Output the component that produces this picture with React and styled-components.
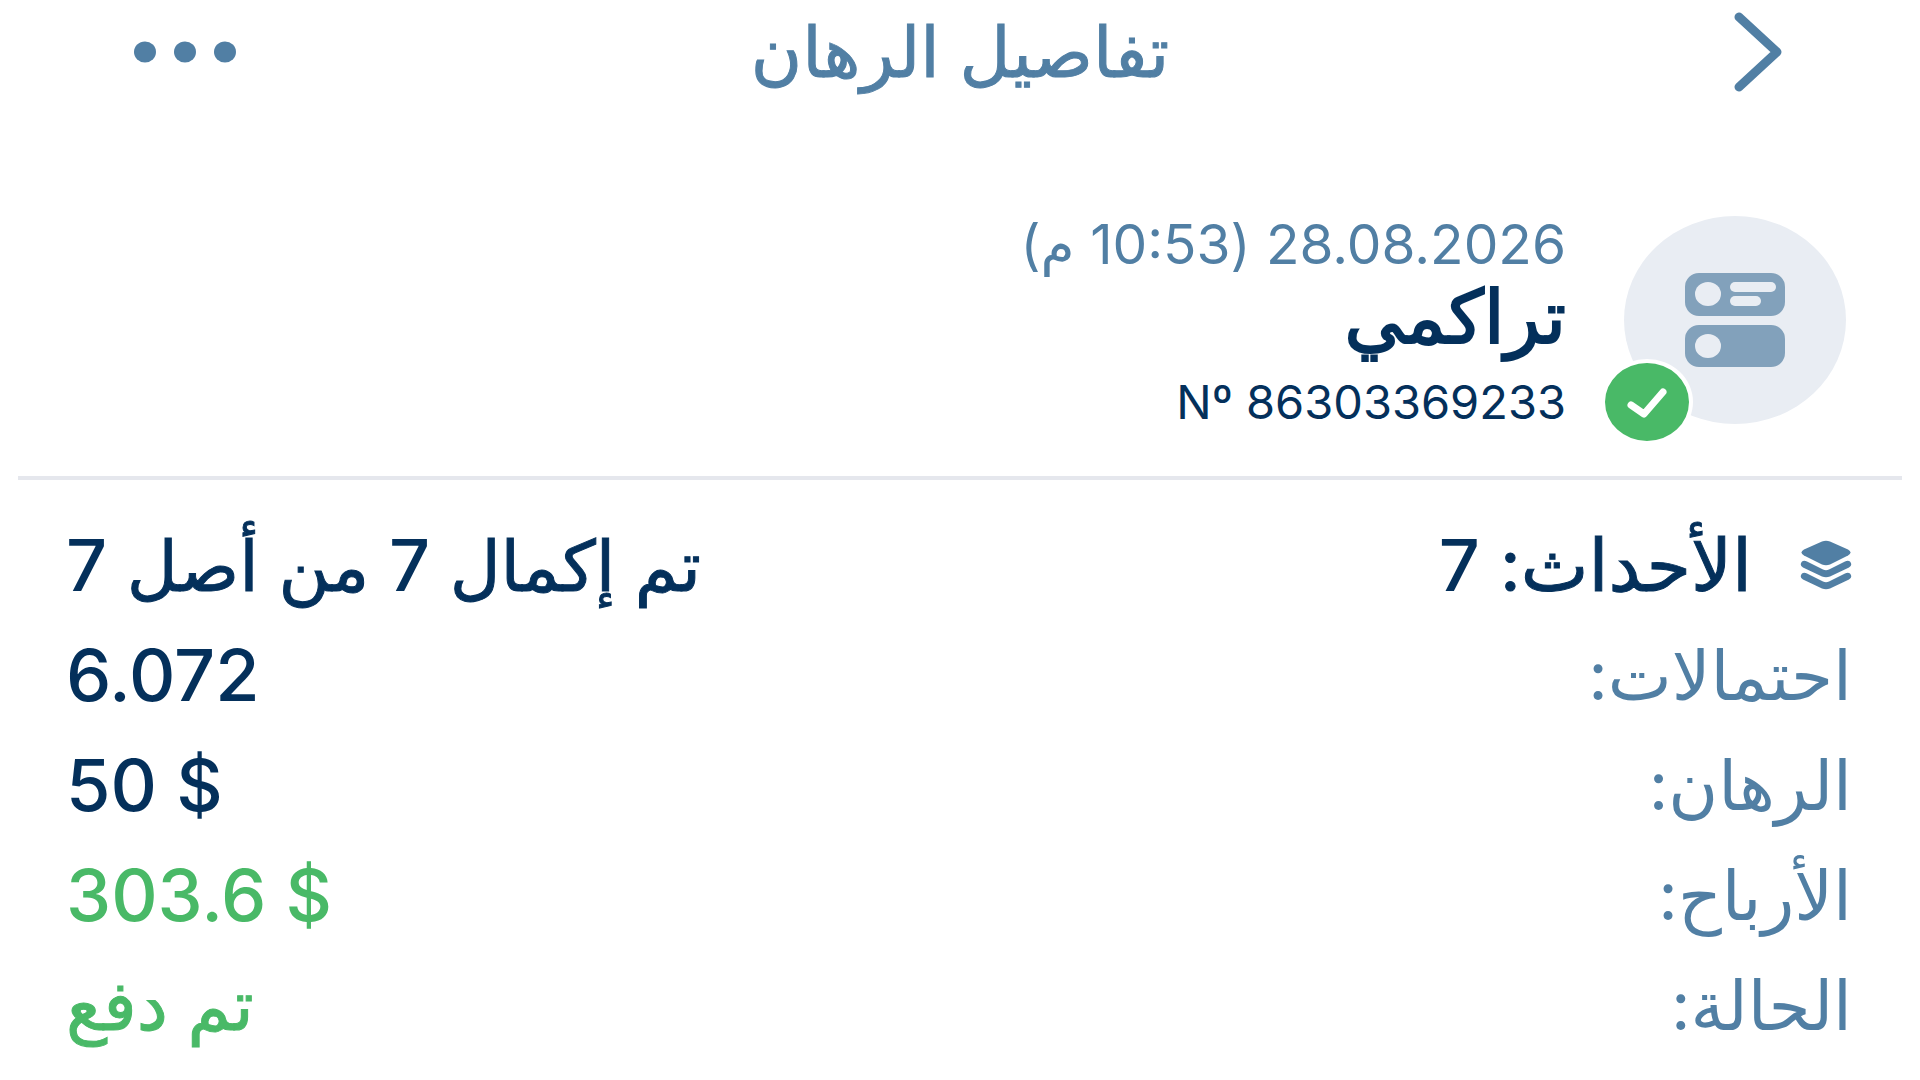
import React from 'react';
import styled, { ThemeProvider, createGlobalStyle } from 'styled-components';

const theme = {
  colors: {
    muted: '#517fa4',
    dark: '#04305b',
    green: '#49b967',
    avatar: '#e9edf3',
    avatarIcon: '#82a1bb',
    divider: '#e5e7ed',
    white: '#ffffff',
  },
};

const GlobalStyle = createGlobalStyle`
  * {
    box-sizing: border-box;
  }
  body {
    background: #ffffff;
    font-family: Inter, 'DejaVu Sans', sans-serif;
    margin: 0;
  }
`;

const Page = styled.main`
  display: flex;
  flex-direction: column;
`;

const Header = styled.header`
  align-items: center;
  color: ${({ theme }) => theme.colors.muted};
  display: grid;
  grid-template-columns: 1fr auto 1fr;
  height: 104px;
  padding: 0 132px;
`;

const Title = styled.h1`
  -webkit-text-stroke: 1px currentColor;
  font-size: 70px;
  font-weight: 400;
  line-height: 100px;
  margin: 0;
`;

const IconButton = styled.button`
  background: none;
  border: 0;
  color: inherit;
  cursor: pointer;
  display: flex;
  justify-self: ${({ $side }) => $side};
  padding: 0;
`;

const Summary = styled.section`
  border-bottom: 4px solid ${({ theme }) => theme.colors.divider};
  display: flex;
  gap: 58px;
  margin: 0 18px;
  padding: 112px 56px 32px;
`;

const Avatar = styled.div`
  background: ${({ theme }) => theme.colors.avatar};
  border-radius: 50%;
  color: ${({ theme }) => theme.colors.avatarIcon};
  display: grid;
  height: 208px;
  place-items: center;
  position: relative;
  width: 222px;
`;

const Badge = styled.span`
  background: ${({ theme }) => theme.colors.green};
  border: 4px solid ${({ theme }) => theme.colors.white};
  border-radius: 50%;
  bottom: -21px;
  color: ${({ theme }) => theme.colors.white};
  display: grid;
  height: 86px;
  left: -23px;
  place-items: center;
  position: absolute;
  width: 92px;
`;

const Info = styled.div`
  color: ${({ theme }) => theme.colors.dark};
  display: flex;
  flex-direction: column;
`;

const DateLine = styled.time`
  color: ${({ theme }) => theme.colors.muted};
  font-size: 55px;
  line-height: 56px;
`;

const BetType = styled.h2`
  -webkit-text-stroke: 2px currentColor;
  font-size: 74px;
  font-weight: 500;
  line-height: 88px;
  margin: 0;
`;

const BetNumber = styled.span`
  font-size: 47px;
  line-height: 84px;
`;

const Details = styled.dl`
  margin: 0;
  padding: 30px 68px 0 66px;
`;

const Row = styled.div`
  align-items: center;
  display: flex;
  font-size: 70px;
  height: 110px;
  justify-content: space-between;
  line-height: 100px;
`;

const Label = styled.dt`
  align-items: center;
  color: ${({ theme, $strong }) => ($strong ? theme.colors.dark : theme.colors.muted)};
  display: flex;
  font-size: ${({ $strong }) => ($strong ? '72px' : '68px')};
  gap: 48px;
`;

const StackIcon = styled.svg`
  color: ${({ theme }) => theme.colors.muted};
`;

const Value = styled.dd`
  color: ${({ theme, $tone }) => theme.colors[$tone]};
  margin: 0;
`;

const Strong = styled.span`
  -webkit-text-stroke: 1px currentColor;
`;

const Num = styled.bdi`
  -webkit-text-stroke: 0;
  font-size: 72px;
  font-weight: 500;
`;

const rows = [
  { label: 'احتمالات:', value: <Num dir="ltr">6.072</Num>, tone: 'dark' },
  { label: 'الرهان:', value: <Num dir="ltr">50 $</Num>, tone: 'dark' },
  { label: 'الأرباح:', value: <Num dir="ltr">303.6 $</Num>, tone: 'green' },
  { label: 'الحالة:', value: <Strong>تم دفع</Strong>, tone: 'green' },
];

const App = () => (
  <ThemeProvider theme={theme}>
    <GlobalStyle />
    <Page dir="rtl" lang="ar">
      <Header>
        <IconButton type="button" aria-label="رجوع" $side="start">
          <svg width="58" height="80" viewBox="0 0 58 80" fill="none">
            <path d="M9 5L47 40L9 75" stroke="currentColor" strokeWidth="9" strokeLinecap="round" strokeLinejoin="round" />
          </svg>
        </IconButton>
        <Title>تفاصيل الرهان</Title>
        <IconButton type="button" aria-label="المزيد" $side="end">
          <svg width="106" height="24" viewBox="0 0 106 24" fill="currentColor">
            <ellipse cx="13" cy="12" rx="11" ry="10.5" />
            <ellipse cx="53" cy="12" rx="11" ry="10.5" />
            <ellipse cx="93" cy="12" rx="11" ry="10.5" />
          </svg>
        </IconButton>
      </Header>

      <Summary>
        <Avatar>
          <svg width="102" height="96" viewBox="0 0 102 96">
            <rect x="1" y="1" width="100" height="43" rx="14" fill="currentColor" />
            <rect x="1" y="53" width="100" height="42" rx="14" fill="currentColor" />
            <g fill={theme.colors.avatar}>
              <ellipse cx="24" cy="22" rx="13" ry="12" />
              <ellipse cx="24" cy="74" rx="13" ry="12" />
              <rect x="46" y="10" width="46" height="10" rx="5" />
              <rect x="46" y="24" width="31" height="10" rx="5" />
            </g>
          </svg>
          <Badge>
            <svg width="40" height="32" viewBox="0 0 40 32" fill="none">
              <path d="M4 19L17 28L36 6" stroke="currentColor" strokeWidth="7" strokeLinecap="round" strokeLinejoin="round" />
            </svg>
          </Badge>
        </Avatar>
        <Info>
          <DateLine dateTime="2026-08-28T22:53">28.08.2026 (10:53 م)</DateLine>
          <BetType>تراكمي</BetType>
          <BetNumber>
            <bdi dir="ltr">Nº 86303369233</bdi>
          </BetNumber>
        </Info>
      </Summary>

      <Details>
        <Row>
          <Label $strong>
            <StackIcon width="52" height="50" viewBox="0 0 52 50" fill="currentColor" aria-hidden="true">
              <path d="M22 1.500Q26 0 30 1.500L48 9.500Q53 12.500 48 15.500L30 24.500Q26 26 22 24.500L4 15.500Q-1 12.500 4 9.500Z" />
              <path d="M2 21.500Q4 20 7 21.500L23 29.500Q26 31 29 29.500L45 21.500Q48 20 50 21.500Q53 25 49 27.500L30 36.500Q26 38 22 36.500L3 27.500Q-1 25 2 21.500Z" />
              <path d="M2 33.500Q4 32 7 33.500L23 41.500Q26 43 29 41.500L45 33.500Q48 32 50 33.500Q53 37 49 39.500L30 48.500Q26 50 22 48.500L3 39.500Q-1 37 2 33.500Z" />
            </StackIcon>
            <Strong>
              الأحداث: <Num>7</Num>
            </Strong>
          </Label>
          <Value $tone="dark">
            <Strong>
              تم إكمال <Num>7</Num> من أصل <Num>7</Num>
            </Strong>
          </Value>
        </Row>
        {rows.map(({ label, value, tone }) => (
          <Row key={label}>
            <Label>{label}</Label>
            <Value $tone={tone}>{value}</Value>
          </Row>
        ))}
      </Details>
    </Page>
  </ThemeProvider>
);

export default App;
